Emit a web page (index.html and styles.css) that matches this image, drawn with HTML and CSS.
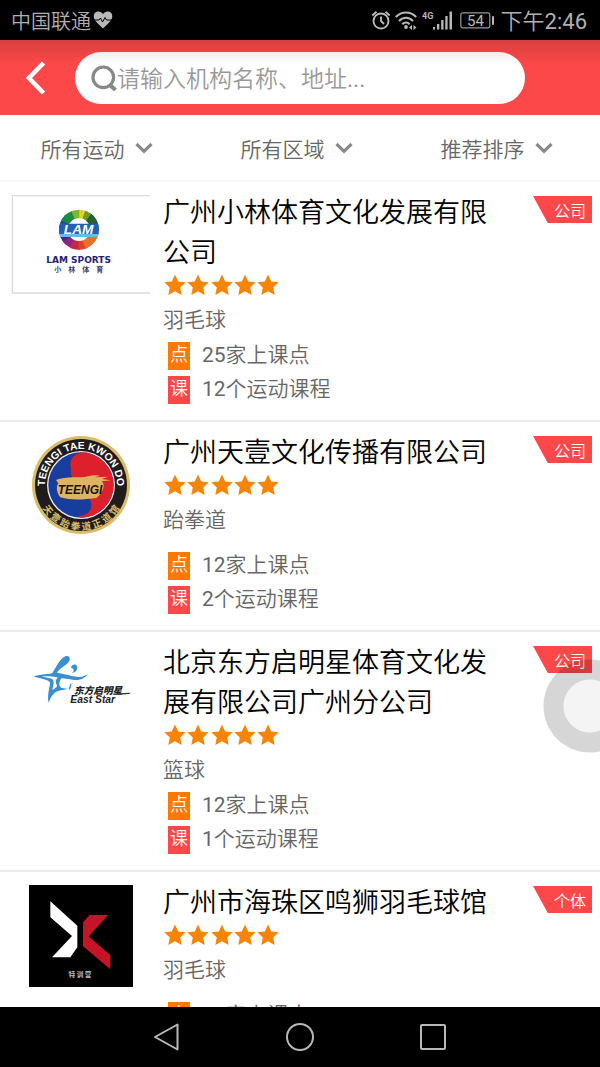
FILE: index.html
```html
<!DOCTYPE html>
<html lang="zh-CN">
<head>
<meta charset="utf-8">
<meta name="viewport" content="width=device-width, initial-scale=1">
<title>机构列表</title>
<link rel="stylesheet" href="styles.css">
</head>
<body>
<svg class="defs" aria-hidden="true">
  <symbol id="star" viewBox="0 0 22 22"><path d="M11 .5 14.2 7.4 21.7 8.2 16.200 13.400 17.700 21 11 17.300 4.300 21 5.800 13.400 .3 8.200 7.800 7.400Z"/></symbol>
  <symbol id="stars" viewBox="0 0 116 22">
    <use href="#star" x="0" width="22" height="22"/><use href="#star" x="23" width="22" height="22"/><use href="#star" x="47" width="22" height="22"/><use href="#star" x="70" width="22" height="22"/><use href="#star" x="93" width="22" height="22"/>
  </symbol>
  <symbol id="chevron" viewBox="0 0 18 12"><path d="M1.500 2 9 9.300 16.500 2" fill="none" stroke="#888" stroke-width="3.200"/></symbol>
</svg>

<div class="status">
  <span class="carrier">中国联通</span>
  <svg class="heart" viewBox="0 0 20 18" width="20" height="18"><path d="M10 17.500C6 13.500.7 10 .7 5.300.7 2.500 2.700.6 5.200.6 7.300.6 9 1.600 10 3.300 11 1.600 12.700.6 14.800.6c2.500 0 4.500 1.900 4.500 4.700C19.300 10 14 13.500 10 17.500Z" fill="#b8b8b8"/><path d="M0 9h6l1.500-2 2 4L12 6.500 13.500 9H20" fill="none" stroke="#000" stroke-width="1"/></svg>
  <div class="indicators">
    <svg viewBox="0 0 20 20" width="20" height="20" fill="none" stroke="#b8b8b8" stroke-width="1.900"><circle cx="10" cy="11" r="7.500"/><path d="M10 6.500V11l3 3M1.300 5.500 5.500 1.800M18.700 5.500 14.500 1.800"/></svg>
    <svg class="wifi" viewBox="0 0 22 20" width="22" height="20" fill="none" stroke="#b8b8b8" stroke-width="2.100"><path d="M.8 7C6.500.9 15.500.9 21.200 7M4 11c4-4.300 10-4.300 14 0M7.300 14.300c2.200-2.200 5.200-2.200 7.400 0"/><g stroke="none" fill="#b8b8b8"><circle cx="11" cy="17" r="1.900"/><path d="M14 17.500l3-2.500v5zM21.500 17.500l-3-2.500v5z"/></g></svg>
    <svg class="signal" viewBox="0 0 31 20" width="31" height="20" fill="#b8b8b8"><text x="0" y="9" class="net">4G</text><path d="M11 17h2v2.500h-2zM15 14h2.300v5.500H15zM19.200 10h2.300v9.500h-2.300zM23.300 6h2.300v13.500h-2.300zM27.500 1.500h2.500v18h-2.500z"/></svg>
    <svg class="battery" viewBox="0 0 35 17" width="35" height="17"><rect x=".8" y=".8" width="29" height="15" rx="2" fill="none" stroke="#999" stroke-width="1.200"/><rect x="32" y="4" width="2" height="9" rx="1" fill="#b8b8b8"/><text x="15.500" y="13.500" class="charge">54</text></svg>
    <span class="time">下午2:46</span>
  </div>
</div>

<header class="topbar">
  <button class="back" type="button" aria-label="返回"><svg viewBox="0 0 20 34" width="20" height="34"><path d="M17.500 2 3 17 17.500 32" fill="none" stroke="#fff" stroke-width="4.500"/></svg></button>
  <label class="search">
    <svg viewBox="0 0 26 26" width="26" height="26" fill="none" stroke="#888"><circle cx="12.300" cy="12.300" r="10.300" stroke-width="3.200"/><path d="M19.500 20.500 24.500 25" stroke-width="4"/></svg>
    <input type="text" placeholder="请输入机构名称、地址..." aria-label="搜索">
  </label>
</header>

<nav class="filters">
  <button type="button">所有运动<svg width="18" height="12"><use href="#chevron"/></svg></button>
  <button type="button">所有区域<svg width="18" height="12"><use href="#chevron"/></svg></button>
  <button type="button">推荐排序<svg width="18" height="12"><use href="#chevron"/></svg></button>
</nav>

<main class="list">
  <article class="card">
    <div class="logo">
      <svg viewBox="33 33 417 297" width="139" height="99">
        <defs><clipPath id="ball"><circle cx="237" cy="137" r="60"/></clipPath></defs>
        <path d="M450 35H37V327H450" fill="#fff" stroke="#dcdcdc" stroke-width="4"/>
        <g clip-path="url(#ball)">
          <path d="M237 137 160 137 180 70Z" fill="#17509b"/>
          <path d="M237 137 168 100 190 60 215 60Z" fill="#1d8a42"/>
          <path d="M237 137 205 60H245Z" fill="#7cb82f"/>
          <path d="M237 137 238 60H275Z" fill="#e4d21f"/>
          <path d="M237 137 262 60 305 90Z" fill="#6d9a31"/>
          <path d="M237 137 285 75 310 137Z" fill="#275f34"/>
          <path d="M237 137 165 137 190 195Z" fill="#4e2587"/>
          <path d="M237 137 182 180 212 210Z" fill="#8e267f"/>
          <path d="M237 137 200 210H240Z" fill="#c92646"/>
          <path d="M237 137 235 210H275Z" fill="#e0402a"/>
          <path d="M237 137 262 210 310 150Z" fill="#e67325"/>
          <circle cx="237" cy="137" r="34" fill="#fff"/>
          <path d="M170 119H305V150H170Z" fill="#2260b5"/>
          <path d="M170 150H305V159H170Z" fill="#65bce8"/>
        </g>
        <text x="236" y="149" class="lam-mark">LAM</text>
        <text x="236" y="237" class="lam-name">LAM SPORTS</text>
        <text x="236" y="264" class="lam-cn">小　林　体　育</text>
      </svg>
    </div>
    <div class="body">
      <div class="info">
        <h2>广州小林体育文化发展有限公司</h2>
        <svg class="rating" width="116" height="22" role="img" aria-label="5星"><use href="#stars"/></svg>
        <p class="sport">羽毛球</p>
      </div>
      <ul class="facts"><li><span class="tag place">点</span>25家上课点</li><li><span class="tag course">课</span>12个运动课程</li></ul>
    </div>
    <span class="kind">公司</span>
  </article>

  <article class="card">
    <div class="logo">
      <svg viewBox="28 30 306 300" width="102" height="100">
        <defs>
          <path id="arcTop" d="M73 180a108 108 0 0 1 216 0"/>
          <path id="arcBottom" d="M46 180a135 135 0 0 0 270 0"/>
        </defs>
        <circle cx="181" cy="180" r="147" fill="#d9bd6a"/><circle cx="181" cy="180" r="138" fill="#211c1c"/>
        <circle cx="181" cy="180" r="102" fill="#eee"/><circle cx="181" cy="180" r="98" fill="#173d9e"/>
        <path d="M181 82a98 98 0 0 1 0 196c-20-10-17-48 5-50 20-3 35-38-5-48-42-16-40-65 0-98Z" fill="#dd202c"/>
        <circle cx="183" cy="118" r="34" fill="#dd202c"/><circle cx="180" cy="240" r="32" fill="#173d9e"/>
        <path d="M106 165c30-10 50-7 74-8 20-1 35-10 58-5l-16 5 40-2-18 7 27 4-28 3c14 10 2 38-16 50-34 5-76 8-108-2-12-14-13-34-6-42Z" fill="#deb363"/>
        <text x="178" y="208" class="tkd-mark">TEENGI</text>
        <text class="tkd-name"><textPath href="#arcTop" startOffset="50%">TEENGI TAE KWON DO</textPath></text>
        <text class="tkd-cn"><textPath href="#arcBottom" startOffset="50%">天 壹 跆 拳 道 正 道 馆</textPath></text>
      </svg>
    </div>
    <div class="body">
      <div class="info">
        <h2>广州天壹文化传播有限公司</h2>
        <svg class="rating" width="116" height="22" role="img" aria-label="5星"><use href="#stars"/></svg>
        <p class="sport">跆拳道</p>
      </div>
      <ul class="facts"><li><span class="tag place">点</span>12家上课点</li><li><span class="tag course">课</span>2个运动课程</li></ul>
    </div>
    <span class="kind">公司</span>
  </article>

  <article class="card">
    <div class="logo">
      <svg class="east" viewBox="30 15 300 300" width="100" height="100">
        <g fill="#3a8fd0">
          <path d="M38 110C62 100 84 104 94 99 106 80 118 54 135 48 145 46 149 55 145 63 138 76 115 84 108 98 128 101 152 108 172 111 184 112 193 106 201 102 190 116 177 121 160 120 148 119 135 116 121 115 112 130 114 137 120 143L140 147 121 151C101 153 91 166 83 188 78 169 85 148 87 130 89 121 66 117 38 110ZM62 109C72 113 90 114 96 119 101 130 94 140 95 151 103 143 108 143 108 136 101 127 106 117 110 112 94 108 76 108 62 109Z" fill-rule="evenodd"/>
          <path d="M150 83C151 73 164 70 168 78 172 88 163 99 153 98 162 93 158 84 150 83ZM143 147 148 131 152 131 147 149Z"/>
        </g>
        <text x="159" y="161" class="star-cn">东方启明星</text>
        <path d="M290 160 329 158 325 162 290 164Z" fill="#333"/>
        <text x="148" y="189" class="star-en">East Star</text>
      </svg>
    </div>
    <div class="body">
      <div class="info">
        <h2>北京东方启明星体育文化发展有限公司广州分公司</h2>
        <svg class="rating" width="116" height="22" role="img" aria-label="5星"><use href="#stars"/></svg>
        <p class="sport">篮球</p>
      </div>
      <ul class="facts"><li><span class="tag place">点</span>12家上课点</li><li><span class="tag course">课</span>1个运动课程</li></ul>
    </div>
    <span class="kind">公司</span>
  </article>

  <article class="card">
    <div class="logo">
      <svg viewBox="28 28 312 306" width="104" height="102">
        <path d="M28 28h312v306H28z" fill="#000"/>
        <path d="M92 77 173 150V215L152 245H97L157 181 92 125Z" fill="#fff"/>
        <path d="M210 118H266L207 182 272 238V281L190 212V140Z" fill="#c51427"/>
        <text x="181" y="304" class="camp">特 训 营</text>
      </svg>
    </div>
    <div class="body">
      <div class="info">
        <h2>广州市海珠区鸣狮羽毛球馆</h2>
        <svg class="rating" width="116" height="22" role="img" aria-label="5星"><use href="#stars"/></svg>
        <p class="sport">羽毛球</p>
      </div>
      <ul class="facts"><li><span class="tag place">点</span>12家上课点</li></ul>
    </div>
    <span class="kind">个体</span>
  </article>
</main>

<footer class="softkeys">
  <button type="button" aria-label="返回"><svg viewBox="0 0 30 30" width="30" height="30"><path d="M25.500 2.500V27.500L3 15Z"/></svg></button>
  <button type="button" aria-label="主页"><svg viewBox="0 0 30 30" width="30" height="30"><circle cx="15" cy="15" r="13"/></svg></button>
  <button type="button" aria-label="最近任务"><svg viewBox="0 0 30 30" width="30" height="30"><rect x="3" y="3" width="24" height="24" rx="1"/></svg></button>
</footer>
<button class="assist" type="button" aria-label="悬浮按钮"></button>
</body>
</html>
```
FILE: styles.css
```css
* { box-sizing: border-box; }
body {
  margin: 0;
  height: 100vh;
  display: flex;
  flex-direction: column;
  position: relative;
  overflow: hidden;
  background: #fff;
  color: #666;
  font-family: Roboto, "Noto Sans CJK SC DemiLight", "Noto Sans CJK SC", sans-serif;
  font-size: 21px;
  font-weight: 400;
}
button, input { font: inherit; color: inherit; border: 0; padding: 0; background: none; }
h2, p, ul { margin: 0; padding: 0; list-style: none; font-weight: inherit; }
svg { display: block; flex: none; }
.defs { position: absolute; width: 0; height: 0; }

.status {
  flex: none;
  height: 40px;
  padding: 0 13px 0 11px;
  display: flex;
  align-items: center;
  background: #000;
  color: #b0b0b0;
}
.carrier { font-size: 20px; }
.heart { margin-left: 2px; }
.indicators { margin-left: auto; display: flex; align-items: center; }
.wifi { margin-left: 4px; }
.signal { margin-left: 5px; }
.battery { margin-left: 7px; }
.net { font-size: 9px; font-weight: 700; }
.charge { font-size: 15px; text-anchor: middle; fill: #b8b8b8; }
.time { margin-left: 6px; padding-bottom: 3px; font-size: 22px; }

.topbar {
  flex: none;
  position: relative;
  height: 75px;
  display: flex;
  align-items: center;
  background: #fc4848;
}
.topbar::after {
  content: "";
  position: absolute;
  inset: 0 0 auto;
  height: 24px;
  background: linear-gradient(rgba(0, 0, 0, .14), rgba(0, 0, 0, 0));
  pointer-events: none;
}
.back { width: 75px; height: 75px; padding-right: 4px; display: flex; align-items: center; justify-content: center; }
.search {
  flex: 1;
  height: 52px;
  margin-right: 75px;
  padding: 0 16px;
  display: flex;
  align-items: center;
  border-radius: 26px;
  background: #fff;
}
.search input { flex: 1; min-width: 0; padding-top: 4px; font-size: 23px; outline: 0; }
.search input::placeholder { color: #999; opacity: 1; }

.filters {
  flex: none;
  height: 67px;
  display: grid;
  grid-template-columns: repeat(3, 1fr);
  border-bottom: 2px solid #f6f6f6;
}
.filters button { display: flex; align-items: center; justify-content: center; gap: 10px; padding-right: 7px; }

.list { flex: 1; min-height: 0; overflow: hidden; }
.card {
  display: flex;
  align-items: flex-start;
  padding: 11px 8px 10px 11px;
  border-bottom: 2px solid #ebebeb;
}
.logo { flex: none; width: 139px; margin: 2px 13px 0 0; display: flex; justify-content: center; }
.body { flex: 1; min-width: 0; }
.info { min-height: 119px; padding-right: 30px; }
.info h2 { color: #000; font-size: 27px; line-height: 40px; }
.rating { margin: 1px 0 2px 1px; fill: #f88404; }
.sport { height: 44px; line-height: 44px; }
.facts li { height: 34px; display: flex; align-items: flex-start; line-height: 26px; }
.tag { width: 22px; height: 28px; margin: 0 12px 0 5px; color: #fff; font-size: 18px; text-align: center; }
.place { background: #ff7800; }
.course { background: #fc4848; }
.kind {
  flex: none;
  width: 59px;
  height: 27px;
  margin-top: 3px;
  padding-right: 6px;
  background: #fc4848;
  clip-path: polygon(0 0, 100% 0, 100% 100%, 25% 100%);
  color: #fff;
  font-size: 16px;
  line-height: 32px;
  text-align: right;
}

.lam-mark { font: italic 700 41px "Liberation Sans", sans-serif; fill: #fff; text-anchor: middle; }
.lam-name { font: 700 27px "DejaVu Sans", sans-serif; fill: #24246e; text-anchor: middle; }
.lam-cn { font: 700 21px "Noto Sans CJK SC", sans-serif; fill: #3b3b72; text-anchor: middle; }
.tkd-mark { font: italic 700 36px "Liberation Sans", sans-serif; fill: #191315; text-anchor: middle; }
.tkd-name { font: 700 31px "Liberation Sans", sans-serif; fill: #fff; text-anchor: middle; }
.tkd-cn { font: 700 29px "Noto Sans CJK SC", sans-serif; fill: #d9bd6a; text-anchor: middle; }
.star-cn { font: italic 900 29px "Noto Sans CJK SC", sans-serif; fill: #222; }
.star-en { font: italic 700 31px "Liberation Sans", sans-serif; fill: #222; }
.camp { font: 700 20px "Noto Sans CJK SC", sans-serif; fill: #bbb; text-anchor: middle; }

.softkeys {
  flex: none;
  height: 60px;
  display: flex;
  justify-content: center;
  background: #000;
}
.softkeys button { width: 133px; display: flex; align-items: center; justify-content: center; }
.softkeys svg { fill: none; stroke: #b8b8b8; stroke-width: 2; stroke-linejoin: round; }
.assist {
  position: absolute;
  right: 0;
  top: 659px;
  width: 57px;
  height: 94px;
  background: radial-gradient(circle at 47px 47px, rgba(0, 0, 0, .045) 26px, rgba(0, 0, 0, .16) 27px, rgba(0, 0, 0, .16) 46px, rgba(0, 0, 0, 0) 47px);
}
```
